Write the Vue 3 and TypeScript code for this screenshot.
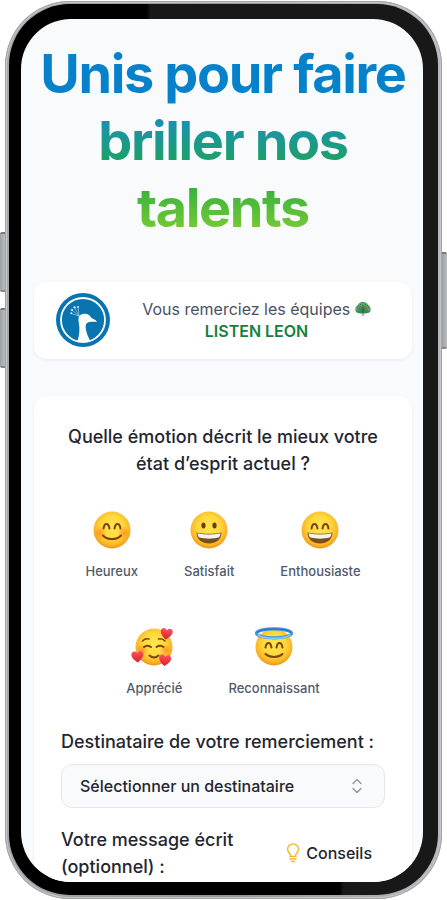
<script setup lang="ts">
import { ref } from 'vue'

type Face = 'smile' | 'grin' | 'laugh' | 'love' | 'angel'

interface Emotion {
  face: Face
  label: string
}

const emotions: Emotion[] = [
  { face: 'smile', label: 'Heureux' },
  { face: 'grin', label: 'Satisfait' },
  { face: 'laugh', label: 'Enthousiaste' },
  { face: 'love', label: 'Apprécié' },
  { face: 'angel', label: 'Reconnaissant' },
]

const selected = ref<Face | null>(null)
const recipient = ref('')
const hearts = ['translate(26.500 0.500) rotate(8 6 6)', 'translate(-2.500 23.500) rotate(-4 6 6)', 'translate(25 27) rotate(6 6 6)']
const fan = [-100, -75, -50, -25, 0, 25, 50, 75, 100]
</script>

<template>
  <div class="stage">
    <div class="phone">
      <span class="key key-up"></span>
      <span class="key key-down"></span>
      <span class="key key-power"></span>
      <div class="bezel">
        <main class="screen">
          <h1 class="title">Unis pour faire briller nos talents</h1>

          <section class="card team">
            <svg class="logo" viewBox="0 0 54 54" aria-hidden="true">
              <circle cx="27" cy="27" r="27" fill="#0874b0" />
              <circle cx="27" cy="27" r="22" fill="none" stroke="#fff" stroke-width="1.8" />
              <path d="M21.500 48C23.500 42 24 36 22.800 29.500C21.800 24 23.500 21 28 20.800C32 20.600 34.200 22.500 35.300 24.800C37.500 26 39.800 27 41 28.900C38 28.400 35.600 28.700 33 29C30 30 29.300 32 29.800 35.500C30.400 40 32 43.500 34 47.500C30 49.200 25.500 49.200 21.500 48Z" fill="#fff" />
              <g stroke="#fff" stroke-width=".5" fill="#fff" opacity=".85">
                <path d="M23 23L15 20.500M23 23L15.800 17M23 23L18.500 14M23 23L22 14" />
                <circle cx="15.300" cy="20.300" r=".8" />
                <circle cx="16" cy="17" r=".9" />
                <circle cx="18.600" cy="14.300" r=".9" />
                <circle cx="22" cy="14" r=".8" />
              </g>
            </svg>
            <p class="team-text">
              Vous remerciez les équipes
              <svg class="peacock" viewBox="0 0 16 16" aria-hidden="true">
                <path d="M1 11C-.5 8 1 5 3 4C4 1.500 6.500 1 8 1C10 1 12 1.800 13 4C15.500 5 16.300 8.500 15 11C12 13 4 13 1 11Z" fill="#338f4c" />
                <g v-for="angle in fan" :key="angle" :transform="`rotate(${angle * 0.9} 8 9)`">
                  <circle cx="8" cy="3" r="1.300" fill="#6cb86c" />
                  <circle cx="8" cy="3" r=".6" fill="#27536f" />
                  <circle cx="8" cy="5.600" r=".6" fill="#b8655a" />
                </g>
                <path d="M7.200 7C8.300 6 9.200 7.200 8.600 8.600C9.600 10.500 9.200 12.500 8 12.500C6.600 12.500 6.400 10.500 7.400 8.600Z" fill="#315d86" />
                <path d="M7.300 12.500V15M8.800 12.500V15" stroke="#b08275" stroke-width=".8" />
              </svg>
              <strong>LISTEN LEON</strong>
            </p>
          </section>

          <form class="card form" @submit.prevent>
            <h2 class="question">Quelle émotion décrit le mieux votre état d’esprit actuel ?</h2>

            <div class="emotions">
              <button
                v-for="emotion in emotions"
                :key="emotion.face"
                type="button"
                class="emotion"
                :aria-pressed="selected === emotion.face"
                @click="selected = emotion.face"
              >
                <svg class="emoji" viewBox="0 0 40 40" aria-hidden="true">
                  <defs>
                    <radialGradient :id="`skin-${emotion.face}`" cx=".5" cy=".42" r=".6">
                      <stop offset="0" stop-color="#ffe74f" />
                      <stop offset=".5" stop-color="#ffd83d" />
                      <stop offset=".8" stop-color="#fbb726" />
                      <stop offset="1" stop-color="#e88a12" />
                    </radialGradient>
                    <radialGradient :id="`blush-${emotion.face}`">
                      <stop offset="0" stop-color="#ff8120" stop-opacity=".7" />
                      <stop offset="1" stop-color="#ff8120" stop-opacity="0" />
                    </radialGradient>
                    <linearGradient :id="`heart-${emotion.face}`" x1="0" y1="0" x2="0" y2="1">
                      <stop offset="0" stop-color="#fb5559" />
                      <stop offset="1" stop-color="#d71e32" />
                    </linearGradient>
                  </defs>
                  <circle cx="20" cy="20" r="18.500" :fill="`url(#skin-${emotion.face})`" />

                  <template v-if="emotion.face === 'smile'">
                    <circle cx="8" cy="23" r="6.500" fill="url(#blush-smile)" />
                    <circle cx="32" cy="23" r="6.500" fill="url(#blush-smile)" />
                    <path d="M11.500 18.500C12.500 12.500 16.500 12.500 17.500 18.500M22.500 18.500C23.500 12.500 27.500 12.500 28.500 18.500" class="line" />
                    <path d="M11 25.500C15.500 30.300 24.500 30.300 29 25.500" class="line" />
                  </template>

                  <template v-else-if="emotion.face === 'grin' || emotion.face === 'laugh'">
                    <g v-if="emotion.face === 'grin'" fill="#713c0c">
                      <ellipse cx="14.500" cy="15.500" rx="2.100" ry="3" />
                      <ellipse cx="25.500" cy="15.500" rx="2.100" ry="3" />
                    </g>
                    <path v-else d="M11.500 18.500C12.500 12.500 16.500 12.500 17.500 18.500M22.500 18.500C23.500 12.500 27.500 12.500 28.500 18.500" class="line" />
                    <path d="M7.500 22.500C15 24.300 25 24.300 32.500 22.500C32.500 29.500 27 33.500 20 33.500C13 33.500 7.500 29.500 7.500 22.500Z" fill="#79501c" />
                    <path d="M8.500 23.200C16 24.800 24 24.800 31.500 23.200C31.500 25.500 30.500 27 29.500 27.500C24 29 16 29 10.500 27.500C9.300 27 8.600 25.500 8.500 23.200Z" fill="#f5f3ed" />
                  </template>

                  <template v-else-if="emotion.face === 'love'">
                    <circle cx="8" cy="23" r="6" fill="url(#blush-love)" />
                    <circle cx="32" cy="23" r="6" fill="url(#blush-love)" />
                    <path d="M10 20Q13 17.500 17 20M22.500 20Q26 17.500 29.500 20M15.500 28.500Q20 32.500 24.500 28.500" class="line" />
                    <path d="M8.500 14Q11 11.200 15 12M24.500 12Q28.500 11 31 14" class="line thin" />
                    <path
                      v-for="heart in hearts"
                      :key="heart"
                      :transform="heart"
                      d="M6 12C3 9.800 0 7 0 4C0 .5 4.500-.5 6 3C7.500-.5 12 .5 12 4C12 7 9 9.800 6 12Z"
                      fill="url(#heart-love)"
                    />
                  </template>

                  <template v-else>
                    <path d="M11.500 20.500C12.500 14.500 16.500 14.500 17.500 20.500M22.500 20.500C23.500 14.500 27.500 14.500 28.500 20.500" class="line" />
                    <path d="M11.500 27C16 31 24 31 28.500 27" class="line" />
                    <ellipse cx="20" cy="6.300" rx="17.500" ry="4.500" fill="none" stroke="#4294dc" stroke-width="3.200" />
                    <path d="M3.500 7.500C8 12.500 32 12.500 36.500 7.500" fill="none" stroke="#83d0f5" stroke-width="1.600" />
                    <path d="M3 5.500C7 .8 33 .8 37 5.500" fill="none" stroke="#2864cc" stroke-width="1" />
                  </template>
                </svg>
                <span>{{ emotion.label }}</span>
              </button>
            </div>

            <label class="label" for="recipient">Destinataire de votre remerciement :</label>
            <div class="select-wrap">
              <select id="recipient" v-model="recipient" class="select">
                <option value="">Sélectionner un destinataire</option>
              </select>
              <svg class="chevrons" viewBox="0 0 16 16" aria-hidden="true">
                <path d="M4 5.500L8 1.500L12 5.500M4 10.500L8 14.500L12 10.500" />
              </svg>
            </div>

            <div class="message-row">
              <span class="label message-label">Votre message écrit (optionnel) :</span>
              <button type="button" class="tips">
                <svg class="bulb" viewBox="0 0 14 20" aria-hidden="true">
                  <path d="M4.500 12.500C4.500 10.500 1.500 9.500 1.500 6.300A5.500 5.300 0 0 1 12.500 6.300C12.500 9.500 9.500 10.500 9.500 12.500M4 13.500H10M4 16H10M5.500 18.500H8.500" />
                </svg>
                Conseils
              </button>
            </div>
          </form>
        </main>
      </div>
    </div>
  </div>
</template>

<style>
body {
  background: #fff;
}
</style>

<style scoped>
* {
  box-sizing: border-box;
}

.stage {
  height: 100vh;
  padding: 1px 5px;
  font-family: Inter, 'Liberation Sans', sans-serif;
  color: #23262f;
}

.phone {
  position: relative;
  height: 100%;
  padding: 3px 4px 4px;
  border-radius: 65px;
  background: linear-gradient(90deg, #a5a7aa, #919396 50%, #b8b8bd);
  box-shadow: inset 0 0 0 1px #a0a2a5, inset 0 0 0 2px #c6c7ca;
}

.key {
  position: absolute;
  width: 5px;
  background: linear-gradient(90deg, #a0a1a4, #bbbcbf);
  border-top: 2px solid #77797c;
  border-bottom: 2px solid #85878a;
}

.key-up,
.key-down {
  left: -5px;
  height: 60px;
  border-radius: 2px 0 0 2px;
}

.key-up {
  top: 231px;
}

.key-down {
  top: 307px;
}

.key-power {
  right: -5px;
  top: 251px;
  height: 97px;
  border-radius: 0 2px 2px 0;
}

.bezel {
  height: 100%;
  padding: 15px 15px 13px 12px;
  border-radius: 61px;
  background:
    linear-gradient(90deg, #000 77%, #181818 78%) bottom / 100% 13px no-repeat,
    linear-gradient(90deg, #000 32%, #181818 33%);
}

.screen {
  height: 100%;
  overflow: hidden;
  padding: 21px 11px 0 13px;
  border-radius: 50px;
  background: #f9fafc;
}

.title {
  margin: 0 0 41px;
  font-size: 54px;
  line-height: 67px;
  font-weight: 700;
  letter-spacing: -0.025em;
  text-align: center;
  color: transparent;
  background: linear-gradient(180deg, #0582ca 30%, #1c92aa 42%, #1da069 60%, #3cb33f 75%, #78ca32 95%);
  background-clip: text;
}

.card {
  background: #fff;
  border-radius: 13px;
  box-shadow: 0 1px 3px rgba(20, 30, 50, 0.07);
}

.team {
  display: flex;
  align-items: center;
  gap: 13px;
  margin-bottom: 37px;
  padding: 11px 22px 12px;
}

.logo {
  flex: none;
  width: 54px;
  height: 54px;
}

.team-text {
  flex: 1;
  margin: 0;
  font-size: 16px;
  line-height: 22px;
  text-align: center;
  color: #4a5162;
}

.team-text strong {
  display: block;
  font-weight: 600;
  color: #15803d;
}

.peacock {
  width: 16px;
  height: 16px;
  vertical-align: -2px;
}

.form {
  padding: 27px;
}

.question {
  margin: 0 0 33px;
  font-size: 18px;
  line-height: 27px;
  font-weight: 500;
  text-align: center;
}

.emotions {
  display: flex;
  flex-wrap: wrap;
  justify-content: center;
  gap: 46px;
  margin-bottom: 30px;
}

.emotion {
  display: flex;
  flex-direction: column;
  align-items: center;
  gap: 11px;
  padding: 0;
  border: 0;
  background: none;
  font: 500 13px/20px Inter, 'Liberation Sans', sans-serif;
  color: #515b6b;
  cursor: pointer;
}

.emoji {
  width: 40px;
  height: 40px;
  overflow: visible;
}

.line {
  fill: none;
  stroke: #7c430a;
  stroke-width: 2;
  stroke-linecap: round;
}

.thin {
  stroke-width: 1.5;
}

.label {
  display: block;
  font-size: 18px;
  line-height: 27px;
  font-weight: 500;
}

.select-wrap {
  position: relative;
  margin: 9px 0 18px;
}

.select {
  display: block;
  width: 100%;
  height: 44px;
  padding: 0 44px 0 18px;
  border: 1px solid #e3e7e9;
  border-radius: 11px;
  background: #f9fafb;
  appearance: none;
  font: 500 16px/22px Inter, 'Liberation Sans', sans-serif;
  color: #23262f;
}

.chevrons {
  position: absolute;
  top: 14px;
  right: 20px;
  width: 16px;
  height: 16px;
  fill: none;
  stroke: #92959a;
  stroke-width: 1.4;
  stroke-linecap: round;
  stroke-linejoin: round;
  pointer-events: none;
}

.message-row {
  display: flex;
  align-items: center;
  justify-content: space-between;
  padding-right: 13px;
}

.message-label {
  flex: 0 1 200px;
}

.tips {
  display: flex;
  align-items: center;
  gap: 6px;
  padding: 0;
  border: 0;
  background: none;
  font: 500 16px/22px Inter, 'Liberation Sans', sans-serif;
  color: #23262f;
  cursor: pointer;
}

.bulb {
  width: 14px;
  height: 20px;
  fill: none;
  stroke: #f7b928;
  stroke-width: 1.5;
  stroke-linecap: round;
  stroke-linejoin: round;
}
</style>
